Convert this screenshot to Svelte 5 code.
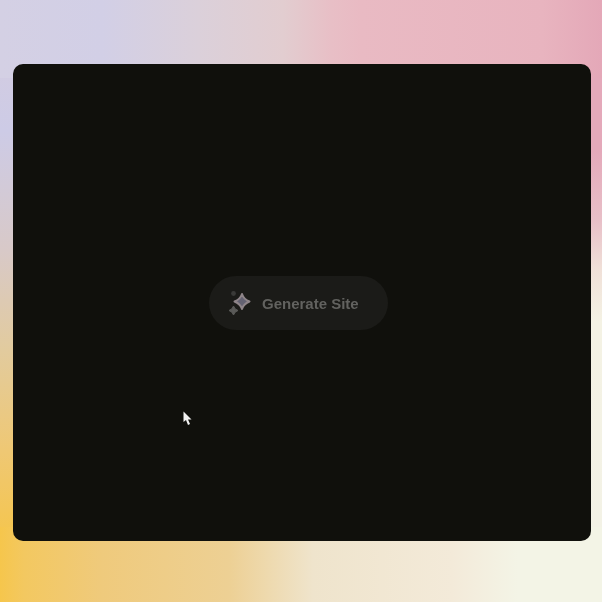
<script lang="ts">
	let label = 'Generate Site';
</script>

<div class="page">
	<div class="panel">
		<button class="generate" type="button">
			<svg class="sparkle" width="24" height="26" viewBox="0 0 24 26" aria-hidden="true">
				<path class="big" d="M14 4 Q15.8 9.4 21.5 11.5 Q15.8 13.6 14 19 Q12.2 13.6 6.5 11.5 Q12.2 9.4 14 4Z" />
				<path class="small" d="M5.5 16 Q6.6 19.4 10 20.5 Q6.6 21.6 5.5 25 Q4.4 21.6 1 20.5 Q4.4 19.4 5.5 16Z" />
				<circle class="dot" cx="5.5" cy="3.5" r="2.4" />
			</svg>
			<span>{label}</span>
		</button>
		<svg class="cursor" width="10" height="15" viewBox="0 0 10 15" aria-hidden="true">
			<path d="M0.5 0.5 L0.5 11 L3 9 L5 14 L7 13 L5 8.5 L8.5 8.5 Z" />
		</svg>
	</div>
</div>

<style>
	:global(body) {
		margin: 0;
	}

	.page {
		box-sizing: border-box;
		width: 602px;
		height: 602px;
		padding: 64px 11px 61px 13px;
		display: flex;
		background-color: #e8d8d0;
		background-repeat: no-repeat;
		background-image:
			linear-gradient(90deg, #d4d0e4 0%, #d2cfe6 17%, #dbd0da 33%, #e2cdd0 47%, #e8bfc6 55%, #e9bac3 60%, #e8b4bf 90%, #e4a8b8 100%),
			linear-gradient(90deg, #f6c64c 0%, #f3c860 4%, #efca7c 17%, #edd094 38%, #efe4cc 52%, #f3ead9 75%, #f3f4e6 86%, #f3f4e6 100%),
			linear-gradient(180deg, #d2cce2 0%, #cdcbe6 14%, #d8c9c8 39%, #e2cb9e 60%, #efc874 81%, #f5c54c 100%),
			linear-gradient(180deg, #e4a9ba 0%, #e4a9ba 18%, #e8c0c8 33%, #f0e0d8 43%, #f4f2e4 54%, #f3f2e6 100%);
		background-size: 602px 78px, 602px 75px, 13px 477px, 11px 477px;
		background-position: 0 0, 0 527px, 0 64px, 591px 64px;
	}

	.panel {
		position: relative;
		flex: 1;
		display: flex;
		align-items: center;
		justify-content: center;
		background: #10100c;
		border-radius: 10px;
	}

	.generate {
		width: 179px;
		height: 54px;
		margin: 1px 7px 0 0;
		padding: 0 0 0 19px;
		display: flex;
		align-items: center;
		gap: 10px;
		border: none;
		border-radius: 27px;
		background: #1b1b18;
		color: #62625f;
		font-family: 'Liberation Sans', Arial, sans-serif;
		font-size: 15px;
		font-weight: 700;
	}

	.generate span {
		filter: blur(0.4px);
	}

	.sparkle {
		flex: none;
		filter: blur(0.6px);
	}

	.big {
		fill: #646272;
		stroke: #8f8589;
		stroke-width: 2;
		stroke-linejoin: round;
	}

	.small {
		fill: #5a5a58;
		stroke: #5a5a58;
		stroke-width: 1;
	}

	.dot {
		fill: #3a3a38;
	}

	.cursor {
		position: absolute;
		left: 170px;
		top: 347px;
	}

	.cursor path {
		fill: #f2f2f2;
	}
</style>
